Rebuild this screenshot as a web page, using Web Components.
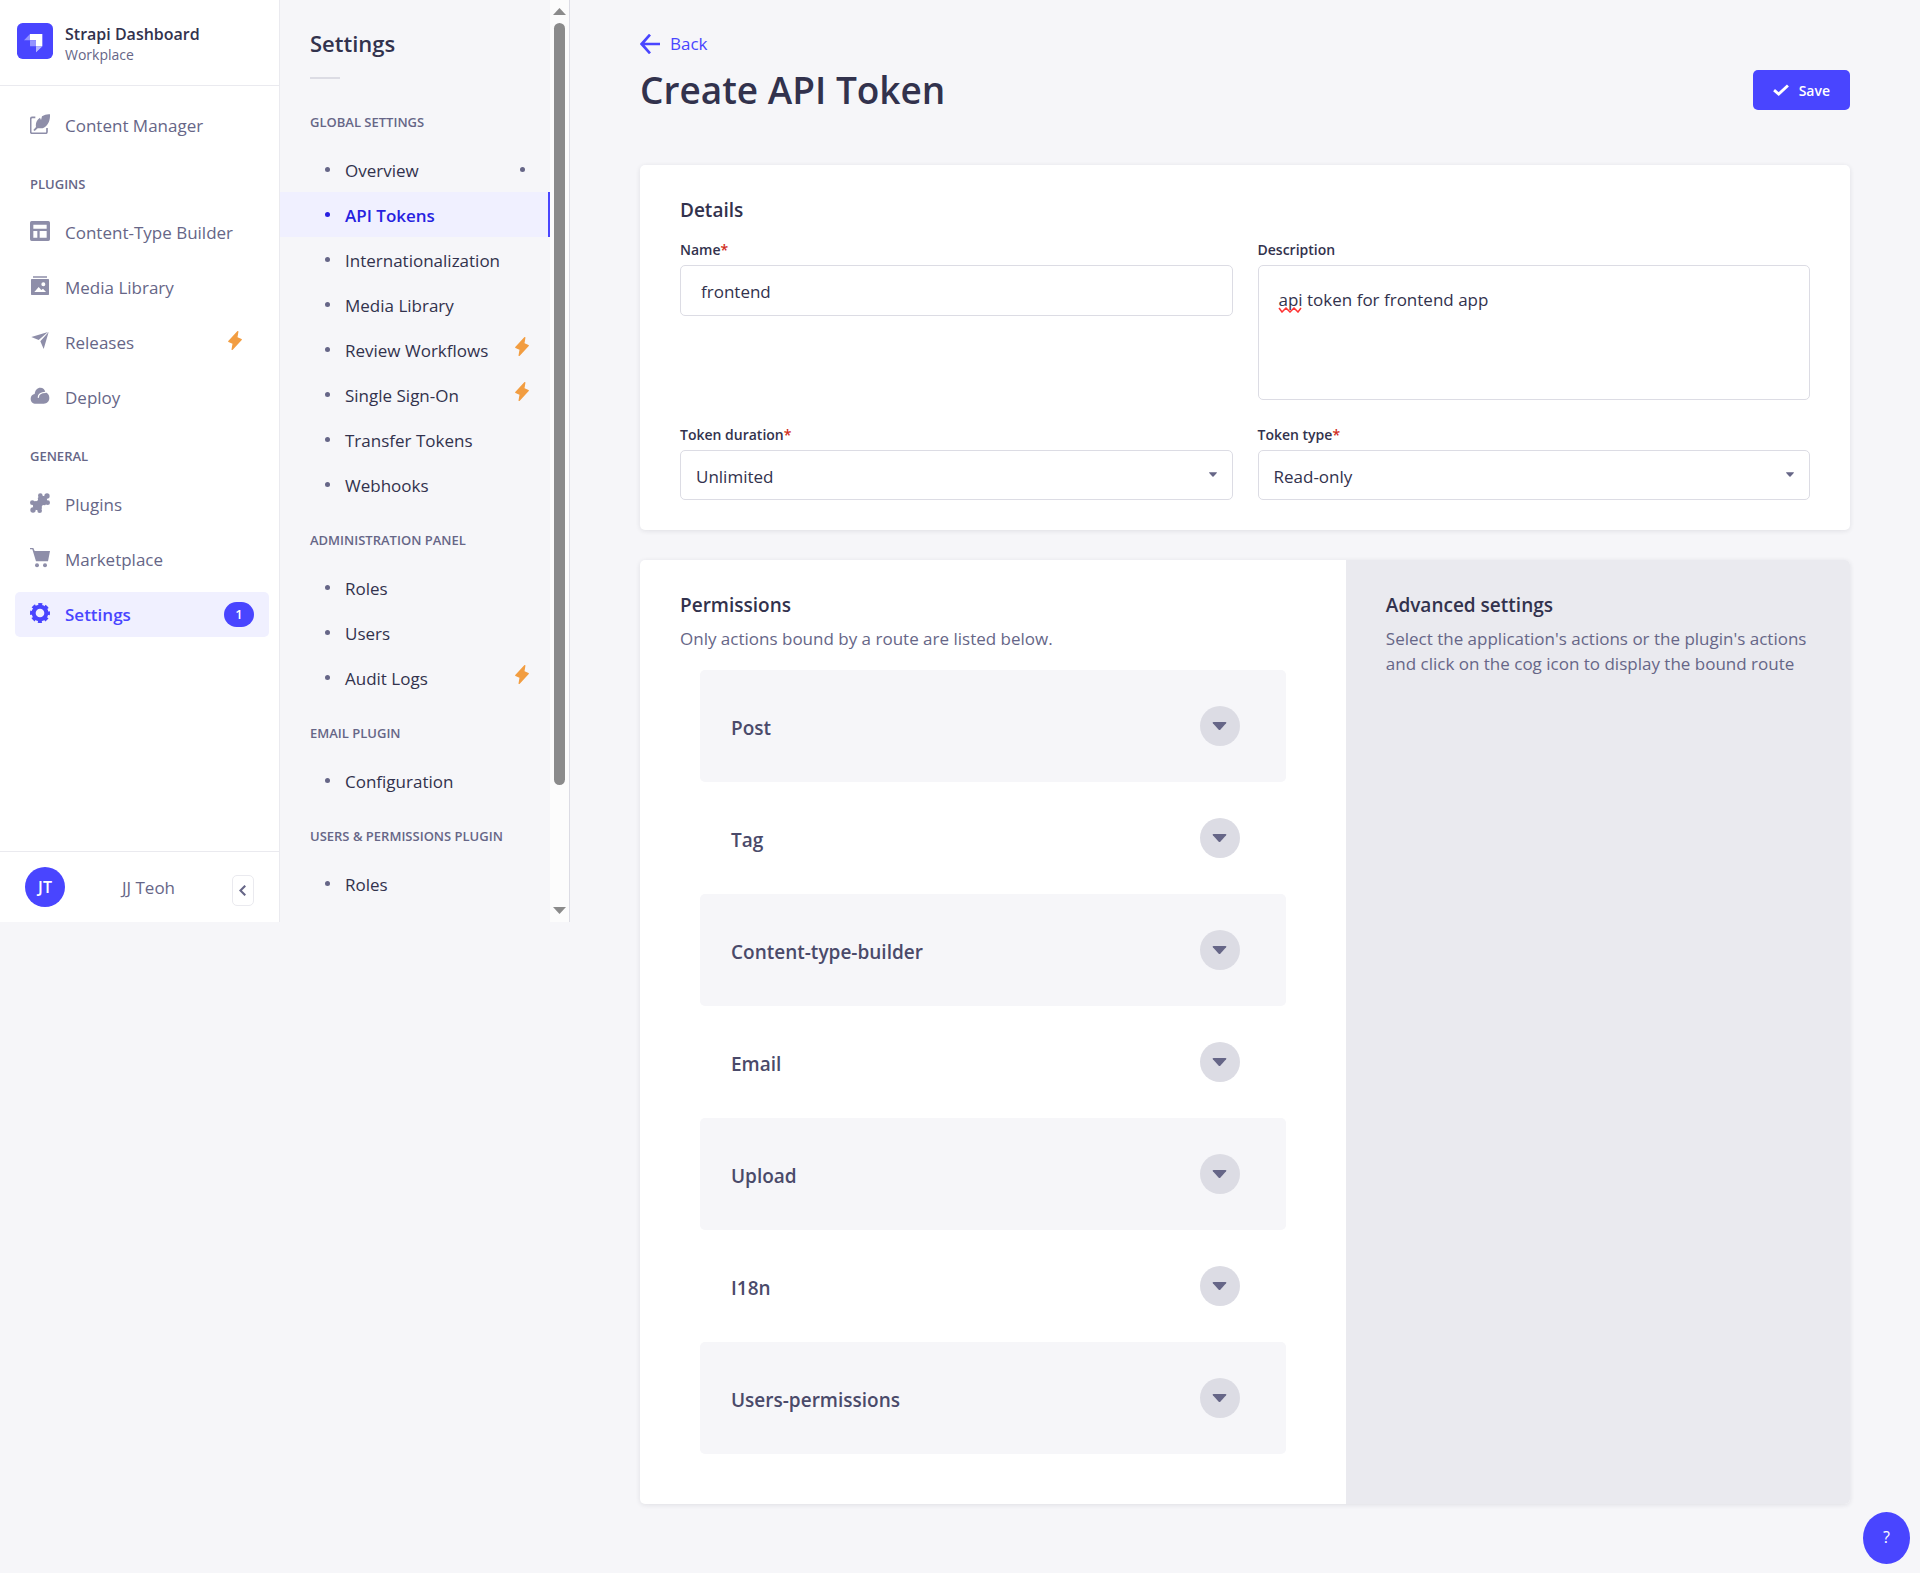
<!DOCTYPE html>
<html lang="en">
<head>
<meta charset="utf-8">
<title>Create API Token</title>
<style>
  :root {
    --primary: #4945ff; --primary-dark: #271fe0; --primary-soft: #f0f0ff;
    --ink: #32324d; --ink-2: #4a4a6a; --muted: #666687; --icon: #8e8ea9;
    --line: #dcdce4; --line-soft: #eaeaef; --page: #f6f6f9; --danger: #d02b20; --bolt: #f29d41;
    --panel-height: 922px;
  }
  html, body { margin: 0; background: var(--page); }
  body { font: 17px/25px "Segoe UI", "Open Sans", "Noto Sans", sans-serif; color: var(--ink); }
</style>
</head>
<body>
<token-app>
  <main-nav slot="nav"></main-nav>
  <settings-nav slot="subnav"></settings-nav>
  <page-header heading="Create API Token"></page-header>
  <details-card></details-card>
  <permissions-card>
    <permission-row shaded>Post</permission-row>
    <permission-row>Tag</permission-row>
    <permission-row shaded>Content-type-builder</permission-row>
    <permission-row>Email</permission-row>
    <permission-row shaded>Upload</permission-row>
    <permission-row>I18n</permission-row>
    <permission-row shaded>Users-permissions</permission-row>
  </permissions-card>
  <help-button slot="help"></help-button>
</token-app>

<script>
const define = (name, markup) => customElements.define(name, class extends HTMLElement {
  constructor() {
    super();
    const t = document.createElement('template');
    t.innerHTML = typeof markup === 'function' ? markup(this) : markup;
    this.attachShadow({ mode: 'open' }).append(t.content.cloneNode(true));
  }
});

const ICONS = {
  content: ['0 0 60 60', '<path d="M16 10H7a5 5 0 0 0-5 5v38a5 5 0 0 0 5 5h39a5 5 0 0 0 5-5V42" fill="none" stroke="currentColor" stroke-width="5"/><path d="M60 1c1 21-7 36-22 42H23l-9 8-4-3 8-9c-2-12 2-21 12-28l3 7 3-11C44 2 52 0 60 1z" fill="currentColor"/>'],
  layout: ['0 0 60 60', '<path fill="currentColor" fill-rule="evenodd" d="M5 0h50a5 5 0 0 1 5 5v50a5 5 0 0 1-5 5H5a5 5 0 0 1-5-5V5a5 5 0 0 1 5-5zm5 11v12h40V11zm0 19v20h12V30zm19 0v20h21V30z"/>'],
  media: ['0 0 60 60', '<path fill="currentColor" fill-rule="evenodd" d="M9 1h42v4H9zM5 9h50a2 2 0 0 1 2 2v44a2 2 0 0 1-2 2H5a2 2 0 0 1-2-2V11a2 2 0 0 1 2-2zm8 39h35l-9-10-5 4-8-9zM40 19a6 6 0 1 0 0 12 6 6 0 0 0 0-12z"/>'],
  plane: ['0 0 60 60', '<path fill="currentColor" d="M4 18 54 3 26 27zM56 3 41 54 31 31z"/>'],
  cloud: ['0 0 60 60', '<path fill="currentColor" d="M18 53C8 53 2 47 2 38c0-7 5-13 12-14C15 12 22 5 31 5c8 0 14 6 15 14 7 2 12 8 12 17 0 10-7 17-17 17z"/><path d="M25 34c0-8 8-15 21-15" fill="none" stroke="#fff" stroke-width="4" stroke-linecap="round"/>'],
  puzzle: ['0 0 60 60', '<g fill="currentColor"><path d="M30 8 50 10l2 20-22 22-20-2L8 30z"/><circle cx="31" cy="8" r="7"/><circle cx="51" cy="9" r="8"/><circle cx="53" cy="29" r="7"/><circle cx="7" cy="29" r="7"/><circle cx="9" cy="51" r="8"/><circle cx="29" cy="53" r="7"/></g><g fill="#fff"><circle cx="18" cy="19" r="6"/><circle cx="41" cy="42" r="6"/></g>'],
  cart: ['0 0 60 60', '<path fill="currentColor" d="M0 0h10l4 9h46l-6 31H18L7 4H0z"/><circle cx="21" cy="52" r="6" fill="currentColor"/><circle cx="45" cy="52" r="6" fill="currentColor"/>'],
  gear: ['0 0 60 60', '<g fill="none" stroke="currentColor"><circle cx="30" cy="30" r="19" stroke-width="12"/><circle cx="30" cy="30" r="26" stroke-width="8" stroke-dasharray="12 8.42" stroke-dashoffset="6"/></g>'],
  bolt: ['0 0 40 55', '<path fill="currentColor" stroke="currentColor" stroke-width="4" stroke-linejoin="round" d="M28 2 2 30l13 6-3 17 26-28-13-6z"/>'],
  back: ['0 0 60 60', '<path d="M60 30H5M30 2 5 30l25 28" fill="none" stroke="currentColor" stroke-width="8"/>'],
  check: ['0 0 45 33', '<path d="m3 17 13 11L42 4" fill="none" stroke="currentColor" stroke-width="8"/>'],
  left: ['0 0 20 32', '<path d="M18 2 4 16l14 14" fill="none" stroke="currentColor" stroke-width="6"/>'],
  caret: ['0 0 14 8', '<path d="M1 0h12q1.500 0 .6 1.200L8 7.500q-1 1-2 0L.4 1.200Q-.5 0 1 0z" fill="currentColor"/>'],
};
define('ui-icon', el => {
  const [box, art] = ICONS[el.getAttribute('name')];
  return `<style>:host{display:block;flex:none;width:20px;height:20px}svg{display:block;width:100%;height:100%}</style>
  <svg viewBox="${box}" aria-hidden="true">${art}</svg>`;
});

define('nav-item', el => `<style>
  :host{display:block}
  a{display:flex;align-items:center;height:45px;padding:0 15px;border-radius:5px;color:var(--muted);text-decoration:none}
  ui-icon{color:var(--icon);margin:0 15px 4px 0}
  span{flex:1}
  :host([active]) a{background:var(--primary-soft);color:var(--primary);font-weight:600}
  :host([active]) ui-icon{color:var(--primary)}
  ::slotted(ui-icon){width:14px;height:19px;margin:0 12px 4px 0;color:var(--bolt)}
  ::slotted(b){box-sizing:border-box;width:30px;height:25px;border-radius:13px;background:var(--primary);color:#fff;font-size:13px;font-weight:600;text-align:center}
</style><a href="#"><ui-icon name="${el.getAttribute('icon')}"></ui-icon><span>${el.getAttribute('label')}</span><slot></slot></a>`);

define('main-nav', `<style>
  :host{display:flex;flex-direction:column;box-sizing:border-box;width:280px;height:var(--panel-height);background:#fff;border-right:1px solid var(--line-soft)}
  header{display:flex;gap:12px;box-sizing:border-box;height:86px;padding:23px 17px;border-bottom:1px solid var(--line-soft)}
  .logo{width:36px;height:36px;flex:none}
  .brand{font-size:16px;font-weight:600;line-height:22px}
  .brand small{display:block;font-size:14px;font-weight:400;line-height:20px;color:var(--muted)}
  nav{flex:1;display:flex;flex-direction:column;gap:10px;padding:17px 10px 0 15px}
  h2{margin:16px 15px 0;font-size:13px;line-height:20px;font-weight:600;color:var(--muted)}
  h2 + nav-item{margin-top:6px}
  footer{display:flex;align-items:center;justify-content:space-between;box-sizing:border-box;height:71px;padding:0 25px;border-top:1px solid var(--line-soft);color:var(--muted)}
  .avatar{width:40px;height:40px;border-radius:50%;background:var(--primary);color:#fff;font-size:16px;line-height:40px;font-weight:600;text-align:center}
  button{display:grid;place-items:center;width:22px;height:31px;padding:0;margin-top:6px;border:1px solid var(--line-soft);border-radius:5px;background:#fff;color:var(--muted)}
  button ui-icon{width:7px;height:11px}
</style>
<header>
  <svg class="logo" viewBox="0 0 108 108" aria-hidden="true"><rect width="108" height="108" rx="17" fill="#4945ff"/><path d="M39 33h37v37H57V52H39z" fill="#fff"/><path d="M39 52h18v18H41q-2 0-2-2zM39 33v19H21zM57 70h19L57 88z" fill="#9593ff"/><path d="M57 70h19L57 88z" fill="#b6b5ff"/></svg>
  <div class="brand">Strapi Dashboard<small>Workplace</small></div>
</header>
<nav aria-label="Main">
  <nav-item icon="content" label="Content Manager"></nav-item>
  <h2>PLUGINS</h2>
  <nav-item icon="layout" label="Content-Type Builder"></nav-item>
  <nav-item icon="media" label="Media Library"></nav-item>
  <nav-item icon="plane" label="Releases"><ui-icon name="bolt"></ui-icon></nav-item>
  <nav-item icon="cloud" label="Deploy"></nav-item>
  <h2>GENERAL</h2>
  <nav-item icon="puzzle" label="Plugins"></nav-item>
  <nav-item icon="cart" label="Marketplace"></nav-item>
  <nav-item icon="gear" label="Settings" active><b>1</b></nav-item>
</nav>
<footer><span class="avatar">JT</span><span>JJ Teoh</span><button type="button" aria-label="Collapse the navigation"><ui-icon name="left"></ui-icon></button></footer>`);

define('sub-link', `<style>
  :host{display:block}
  a{display:flex;align-items:center;box-sizing:border-box;height:45px;padding:0 25px 0 45px;color:var(--ink);text-decoration:none}
  i{flex:none;width:5px;height:5px;border-radius:50%;background:var(--muted)}
  span{flex:1;margin-left:15px;padding-top:2px}
  .end{display:none}
  :host([mark]) .end{display:block}
  ::slotted(ui-icon){width:14px;height:19px;margin:0 -4px 7px 0;color:var(--bolt)}
  :host([active]) a{background:var(--primary-soft);color:var(--primary-dark);font-weight:600;border-right:2px solid var(--primary)}
  :host([active]) i{background:var(--primary-dark)}
</style><a href="#"><i></i><span><slot></slot></span><slot name="end"></slot><i class="end"></i></a>`);

define('sub-group', el => `<style>
  :host{display:block}
  h3{margin:0 0 15px 30px;font-size:13px;line-height:20px;font-weight:600;color:var(--muted)}
</style><h3>${el.getAttribute('label').replace('&', '&amp;')}</h3><slot></slot>`);

define('settings-nav', `<style>
  :host{display:flex;box-sizing:border-box;width:290px;height:var(--panel-height);overflow:hidden;border-right:1px solid var(--line)}
  .list{flex:1;display:flex;flex-direction:column;gap:23px}
  h2{margin:29px 30px 0;font-size:22px;line-height:28px;font-weight:600}
  hr{width:30px;height:2px;margin:-3px 30px 10px;border:0;background:var(--line)}
  .bar{display:flex;flex-direction:column;align-items:center;width:19px;box-sizing:border-box;padding:8px 0;background:#fcfcfc;color:#8b8b8b}
  .track{flex:1;width:11px;padding:8px 0}
  .thumb{height:87%;border-radius:6px;background:currentColor}
  .bar svg{display:block;flex:none}
</style>
<nav class="list" aria-label="Settings">
  <h2>Settings</h2><hr>
  <sub-group label="GLOBAL SETTINGS">
    <sub-link mark>Overview</sub-link><sub-link active>API Tokens</sub-link><sub-link>Internationalization</sub-link><sub-link>Media Library</sub-link>
    <sub-link>Review Workflows<ui-icon slot="end" name="bolt"></ui-icon></sub-link>
    <sub-link>Single Sign-On<ui-icon slot="end" name="bolt"></ui-icon></sub-link>
    <sub-link>Transfer Tokens</sub-link><sub-link>Webhooks</sub-link>
  </sub-group>
  <sub-group label="ADMINISTRATION PANEL">
    <sub-link>Roles</sub-link><sub-link>Users</sub-link><sub-link>Audit Logs<ui-icon slot="end" name="bolt"></ui-icon></sub-link>
  </sub-group>
  <sub-group label="EMAIL PLUGIN"><sub-link>Configuration</sub-link></sub-group>
  <sub-group label="USERS &amp; PERMISSIONS PLUGIN"><sub-link>Roles</sub-link></sub-group>
</nav>
<div class="bar" aria-hidden="true">
  <svg width="13" height="7" viewBox="0 0 13 7"><path d="M6.500 0 13 7H0z" fill="currentColor"/></svg>
  <div class="track"><div class="thumb"></div></div>
  <svg width="13" height="7" viewBox="0 0 13 7"><path d="M0 0h13L6.500 7z" fill="currentColor"/></svg>
</div>`);

define('page-header', el => `<style>
  :host{display:block}
  a{display:flex;width:fit-content;align-items:center;gap:10px;color:var(--primary);text-decoration:none}
  .row{display:flex;align-items:center;justify-content:space-between;margin-top:9px}
  h1{margin:0;font-size:37px;line-height:50px;font-weight:600}
  button{display:flex;align-items:center;gap:10px;height:40px;padding:0 20px;border:0;border-radius:5px;background:var(--primary);color:#fff;font-family:inherit;font-size:14px;font-weight:600}
  button ui-icon{width:16px;height:12px}
</style>
<a href="#"><ui-icon name="back"></ui-icon>Back</a>
<div class="row"><h1>${el.getAttribute('heading')}</h1><button type="button"><ui-icon name="check"></ui-icon>Save</button></div>`);

define('details-card', `<style>
  :host{display:block;margin-top:50px;padding:30px 40px;border-radius:5px;background:#fff;box-shadow:0 1px 5px rgba(33,33,52,.1)}
  h2{margin:0 0 15px;font-size:19px;line-height:30px;font-weight:600}
  .grid{display:grid;grid-template-columns:1fr 1fr;gap:25px;align-items:start}
  .field{display:flex;flex-direction:column;gap:5px}
  label{font-size:14px;line-height:20px;font-weight:600}
  em{font-style:normal;color:var(--danger)}
  input,textarea,select{box-sizing:border-box;width:100%;margin:0;border:1px solid var(--line);border-radius:5px;background:#fff;color:var(--ink);font:inherit;outline:0}
  input{height:51px;padding:2px 20px 0}
  textarea{display:block;height:135px;padding:21px 20px;resize:none}
  select{appearance:none;height:50px;padding:3px 15px 0}
  .pick,.note{display:grid;align-items:center}
  .pick > *,.note > *{grid-area:1/1}
  .pick ui-icon{width:8px;height:5px;justify-self:end;margin:0 16px 2px 0;color:var(--muted);pointer-events:none}
  .note svg{align-self:start;margin:42px 0 0 20px;pointer-events:none}
</style>
<h2>Details</h2>
<div class="grid">
  <div class="field"><label for="name">Name<em>*</em></label><input id="name" type="text" value="frontend"></div>
  <div class="field"><label for="desc">Description</label><div class="note"><textarea id="desc" spellcheck="false">api token for frontend app</textarea>
    <svg width="24" height="6" viewBox="0 0 24 6" aria-hidden="true"><path d="m1 1 3 4 4-4 4 4 4-4 4 4 3-4" fill="none" stroke="#f33" stroke-width="1.500"/></svg></div></div>
  <div class="field"><label for="life">Token duration<em>*</em></label><div class="pick"><select id="life"><option>Unlimited</option></select><ui-icon name="caret"></ui-icon></div></div>
  <div class="field"><label for="type">Token type<em>*</em></label><div class="pick"><select id="type"><option>Read-only</option></select><ui-icon name="caret"></ui-icon></div></div>
</div>`);

define('permission-row', `<style>
  :host{display:block}
  h3{margin:0}
  button{display:flex;align-items:center;justify-content:space-between;box-sizing:border-box;width:100%;height:112px;padding:0 46px 0 31px;border:0;border-radius:5px;background:none;color:var(--ink-2);font-family:inherit;font-size:19px;line-height:25px;font-weight:600}
  :host([shaded]) button{background:var(--page)}
  .label{padding-top:5px}
  .knob{display:grid;place-items:center;width:40px;height:40px;border-radius:50%;background:var(--line);color:var(--muted)}
  ui-icon{width:15px;height:8px}
</style><h3><button type="button" aria-expanded="false"><span class="label"><slot></slot></span><span class="knob"><ui-icon name="caret"></ui-icon></span></button></h3>`);

define('permissions-card', `<style>
  :host{display:grid;grid-template-columns:7fr 5fr;margin-top:30px;border-radius:5px;background:#fff;box-shadow:0 1px 5px rgba(33,33,52,.1);overflow:hidden}
  section,aside{padding:30px 40px}
  section{padding-bottom:50px}
  aside{background:var(--line-soft)}
  h2{margin:0 0 6px;font-size:19px;line-height:30px;font-weight:600}
  p{margin:0;color:var(--muted)}
  .rows{margin:19px 20px 0}
</style>
<section><h2>Permissions</h2><p>Only actions bound by a route are listed below.</p><div class="rows"><slot></slot></div></section>
<aside><h2>Advanced settings</h2><p>Select the application's actions or the plugin's actions and click on the cog icon to display the bound route</p></aside>`);

define('help-button', `<style>
  :host{display:block}
  button{width:47px;height:52px;padding:0 0 3px;border:0;border-radius:50%;background:var(--primary);color:#fff;font-family:inherit;font-size:16px}
</style><button type="button" aria-label="Help">?</button>`);

define('token-app', `<style>
  :host{display:flex;align-items:flex-start;min-height:100vh}
  .side{display:flex;flex:none}
  main{flex:1;min-width:0;padding:31px 70px 0}
  .help{position:fixed;right:10px;bottom:9px}
</style>
<div class="side"><slot name="nav"></slot><slot name="subnav"></slot></div>
<main><slot></slot></main>
<div class="help"><slot name="help"></slot></div>`);
</script>
</body>
</html>
